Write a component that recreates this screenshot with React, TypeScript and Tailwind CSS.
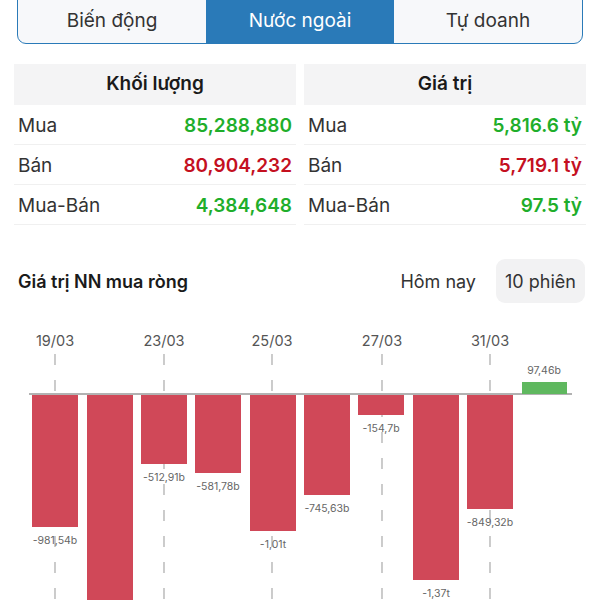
import React from 'react';

const tabs = ['Biến động', 'Nước ngoài', 'Tự doanh'];

const rowsVol = [
  { label: 'Mua', value: '85,288,880', color: 'text-[#1fae2b]' },
  { label: 'Bán', value: '80,904,232', color: 'text-[#c4101f]' },
  { label: 'Mua-Bán', value: '4,384,648', color: 'text-[#1fae2b]' },
];

const rowsVal = [
  { label: 'Mua', value: '5,816.6 tỷ', color: 'text-[#1fae2b]' },
  { label: 'Bán', value: '5,719.1 tỷ', color: 'text-[#c4101f]' },
  { label: 'Mua-Bán', value: '97.5 tỷ', color: 'text-[#1fae2b]' },
];

// chart coords relative to the svg top (page y 320)
const BASE = 74;
const bars = [
  { x: 32, bottom: 207, label: '-981,54b' },
  { x: 87, bottom: 300, label: '' },
  { x: 141, bottom: 144, label: '-512,91b' },
  { x: 195, bottom: 153, label: '-581,78b' },
  { x: 250, bottom: 211, label: '-1,01t' },
  { x: 304, bottom: 175, label: '-745,63b' },
  { x: 358, bottom: 95, label: '-154,7b' },
  { x: 413, bottom: 260, label: '-1,37t' },
  { x: 467, bottom: 189, label: '-849,32b' },
];

const dates = [
  { x: 55, label: '19/03' },
  { x: 164, label: '23/03' },
  { x: 272, label: '25/03' },
  { x: 382, label: '27/03' },
  { x: 490, label: '31/03' },
];

const Table = ({ title, rows }: { title: string; rows: typeof rowsVol }) => (
  <div className="flex flex-col">
    <div className="h-[41px] bg-[#f4f4f5] flex items-center justify-center text-[19px] font-semibold text-[#1a1a1a]">
      {title}
    </div>
    {rows.map((r) => (
      <div key={r.label} className="h-[40px] flex items-center justify-between pt-[4px] px-[4px] border-b border-[#f0f0f0]">
        <span className="text-[19px] text-[#333]">{r.label}</span>
        <span className={`text-[19px] font-semibold ${r.color}`}>{r.value}</span>
      </div>
    ))}
  </div>
);

const Chart = () => (
  <svg width={600} height={280} viewBox="0 0 600 280" className="block">
    {dates.map((d) => (
      <g key={d.label}>
        <text x={d.x} y={26} textAnchor="middle" fontSize={14.5} fill="#555" fontFamily="Inter, sans-serif">
          {d.label}
        </text>
        <line x1={d.x} y1={34} x2={d.x} y2={280} stroke="#aaa" strokeWidth={1.2} strokeDasharray="11 15" />
      </g>
    ))}
    <line x1={29} y1={BASE} x2={572} y2={BASE} stroke="#999" strokeWidth={1.5} />
    {bars.map((b) => (
      <g key={b.x}>
        <rect x={b.x} y={BASE + 1} width={46} height={b.bottom - BASE - 1} fill="#d04858" />
        {b.label && (
          <text x={b.x + 23} y={b.bottom + 17} textAnchor="middle" fontSize={10.5} fill="#666" fontFamily="Inter, sans-serif">
            {b.label}
          </text>
        )}
      </g>
    ))}
    <rect x={522} y={62} width={45} height={12} fill="#5fb85f" />
    <text x={544} y={54} textAnchor="middle" fontSize={10.5} fill="#666" fontFamily="Inter, sans-serif">
      97,46b
    </text>
  </svg>
);

export default function App() {
  return (
    <div className="w-[600px] h-[600px] overflow-hidden bg-white font-['Inter',sans-serif]">
      {/* Tabs */}
      <div className="mx-[17px] -mt-[8px] h-[52px] flex border-[1.5px] border-[#2a7ab8] rounded-b-[9px] overflow-hidden bg-[#f7f8fa]">
        {tabs.map((t, i) => (
          <div
            key={t}
            className={`flex-1 flex items-center justify-center pt-[6px] text-[19px] ${
              i === 1 ? 'bg-[#2a7ab8] text-white' : 'text-[#333]'
            }`}
          >
            {t}
          </div>
        ))}
      </div>

      {/* Tables */}
      <div className="mt-[20px] px-[14px] grid grid-cols-2 gap-[8px]">
        <Table title="Khối lượng" rows={rowsVol} />
        <Table title="Giá trị" rows={rowsVal} />
      </div>

      {/* Section header */}
      <div className="mt-[34px] pl-[18px] pr-[15px] flex items-center">
        <span className="flex-1 text-[18px] font-semibold text-[#1a1a1a]">Giá trị NN mua ròng</span>
        <span className="text-[18px] text-[#333] mr-[20px]">Hôm nay</span>
        <span className="h-[44px] w-[89px] rounded-[9px] bg-[#f2f2f3] flex items-center justify-center text-[18px] text-[#333]">
          10 phiên
        </span>
      </div>

      <div className="mt-[17px]">
        <Chart />
      </div>
    </div>
  );
}
